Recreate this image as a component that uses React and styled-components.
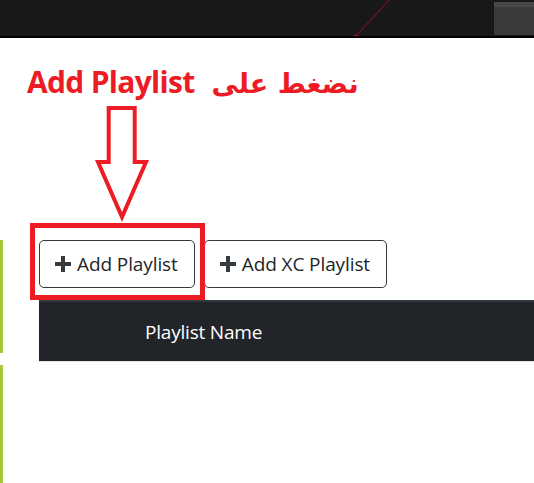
import React from "react";
import styled, { createGlobalStyle } from "styled-components";

const GlobalStyle = createGlobalStyle`
  html, body {
    margin: 0;
    padding: 0;
    background: #ffffff;
  }
  body {
    font-family: "Open Sans", "Noto Sans", "DejaVu Sans", sans-serif;
    color: #212529;
    overflow: hidden;
  }
`;

const Page = styled.div`
  min-height: 100vh;
  display: flex;
  flex-direction: column;
`;

const TopBar = styled.header`
  height: 36px;
  background: #181818;
  border-bottom: 2px solid #000;
  display: flex;
  align-items: stretch;
  padding-left: 345px;
`;

const Glint = styled.svg`
  display: block;
  flex: none;
`;

const WindowTab = styled.div`
  margin: 2px 0 1px auto;
  width: 40px;
  background: #3a3a3a;
  border-top: 5px solid #474747;
`;

const Annotation = styled.section`
  padding: 25px 0 18px 27px;
`;

const Title = styled.h1`
  margin: 0;
  font-size: 30px;
  line-height: 38px;
  font-weight: 700;
  color: #ed1c24;
  letter-spacing: -0.7px;
  white-space: nowrap;
`;

const Arabic = styled.span`
  font-family: "DejaVu Sans", sans-serif;
  font-weight: 700;
  letter-spacing: 0;
  font-size: 27px;
  margin-left: 17px;
`;

const Arrow = styled.svg`
  display: block;
  margin: 1px 0 0 66px;
`;

const Workspace = styled.div`
  flex: 1;
  display: flex;
`;

const Rail = styled.div`
  width: 3px;
  flex: none;
  display: flex;
  flex-direction: column;
  gap: 12px;
`;

const RailSegment = styled.span`
  display: block;
  background: #a6c83c;
  height: ${(p) => (p.$fill ? "auto" : `${p.$h}px`)};
  flex: ${(p) => (p.$fill ? 1 : "none")};
`;

const Main = styled.main`
  flex: 1;
  padding-left: 36px;
`;

const Toolbar = styled.div`
  display: flex;
  gap: 9px;
`;

const ButtonSlot = styled.div`
  position: relative;
`;

const Highlight = styled.span`
  position: absolute;
  left: -9px;
  top: -17px;
  right: -10px;
  bottom: -12px;
  border: 5px solid #ed1c24;
  pointer-events: none;
`;

const OutlineButton = styled.button`
  display: flex;
  align-items: center;
  gap: 6px;
  height: 48px;
  padding: 0 16px 0 15px;
  background: #fff;
  border: 1px solid #343a40;
  border-radius: 5px;
  font-family: "Open Sans", "Noto Sans", sans-serif;
  font-size: 19px;
  letter-spacing: -0.1px;
  color: #212529;
  cursor: pointer;
`;

const PlusIcon = styled.svg`
  display: block;
  flex: none;
`;

const Table = styled.div`
  margin-top: 12px;
`;

const HeaderRow = styled.div`
  display: grid;
  grid-template-columns: 94px 1fr;
  align-items: center;
  height: 59px;
  padding: 0 12px;
  background: #212529;
  border-top: 2px solid #32383e;
  border-bottom: 1px solid #dee2e6;
  color: #fff;
  font-size: 19px;
  letter-spacing: -0.2px;
`;

const Plus = () => (
  <PlusIcon width="16" height="16" viewBox="0 0 16 16">
    <path d="M6 0h4v6h6v4h-6v6H6v-6H0V6h6z" fill="#343a40" />
  </PlusIcon>
);

export default function App() {
  return (
    <Page>
      <GlobalStyle />
      <TopBar>
        <Glint width="47" height="36" viewBox="0 0 47 36">
          <line x1="44" y1="0" x2="11" y2="36" stroke="#5a1520" strokeWidth="1.5" />
          <circle cx="11" cy="36" r="1.6" fill="#e0102a" />
        </Glint>
        <WindowTab />
      </TopBar>

      <Annotation>
        <Title>
          Add Playlist<Arabic>نضغط على</Arabic>
        </Title>
        <Arrow width="58" height="118" viewBox="0 0 58 118">
          <path
            d="M15.7 4H41.7V58H53L29 113L5 58H15.7Z"
            fill="#fff"
            stroke="#ed1c24"
            strokeWidth="4"
            strokeLinejoin="miter"
          />
        </Arrow>
      </Annotation>

      <Workspace>
        <Rail>
          <RailSegment $h={113} />
          <RailSegment $fill />
        </Rail>
        <Main>
          <Toolbar>
            <ButtonSlot>
              <OutlineButton>
                <Plus />
                Add Playlist
              </OutlineButton>
              <Highlight />
            </ButtonSlot>
            <OutlineButton>
              <Plus />
              Add XC Playlist
            </OutlineButton>
          </Toolbar>
          <Table>
            <HeaderRow>
              <span />
              <span>Playlist Name</span>
            </HeaderRow>
          </Table>
        </Main>
      </Workspace>
    </Page>
  );
}
